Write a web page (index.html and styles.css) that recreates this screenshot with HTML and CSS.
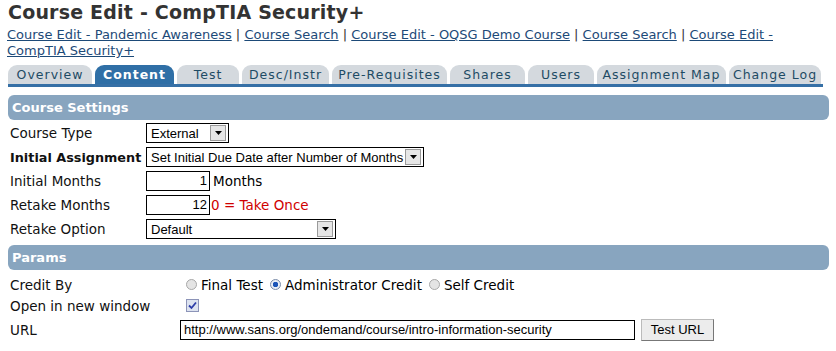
FILE: index.html
```html
<!DOCTYPE html>
<html lang="en">
<head>
	<meta charset="UTF-8">
	<title>Course Edit - CompTIA Security+</title>
	<link rel="stylesheet" href="styles.css">
</head>
<body>
	<div class="page">
		<h1 class="title">Course Edit - CompTIA Security+</h1>
		<div class="crumbs">
			<a href="#">Course Edit - Pandemic Awareness</a> | <a href="#">Course Search</a> | <a href="#">Course Edit - OQSG Demo Course</a> | <a href="#">Course Search</a> | <a href="#">Course Edit -</a><br><a href="#">CompTIA Security+</a>
		</div>
		<ul class="tabs">
			<li class="tab" style="width:84px">Overview</li>
			<li class="tab active" style="width:79px">Content</li>
			<li class="tab" style="width:62px">Test</li>
			<li class="tab" style="width:87px">Desc/Instr</li>
			<li class="tab" style="width:115px">Pre-Requisites</li>
			<li class="tab" style="width:75px">Shares</li>
			<li class="tab" style="width:66px">Users</li>
			<li class="tab" style="width:129px">Assignment Map</li>
			<li class="tab" style="width:92px">Change Log</li>
		</ul>

		<div class="section">Course Settings</div>
		<div class="rows">
			<div class="row">
				<div class="label">Course Type</div>
				<div class="select" style="width:81px"><span class="val">External</span><span class="arrow"><svg width="7" height="4" viewBox="0 0 7 4"><path d="M0 0h7L3.5 4z" fill="#000"/></svg></span></div>
			</div>
			<div class="row">
				<div class="label bold">Initial Assignment</div>
				<div class="select" style="width:276px"><span class="val">Set Initial Due Date after Number of Months</span><span class="arrow"><svg width="7" height="4" viewBox="0 0 7 4"><path d="M0 0h7L3.5 4z" fill="#000"/></svg></span></div>
			</div>
			<div class="row">
				<div class="label">Initial Months</div>
				<div class="num">1</div>
				<span class="after">Months</span>
			</div>
			<div class="row">
				<div class="label">Retake Months</div>
				<div class="num">12</div>
				<span class="after red">0 = Take Once</span>
			</div>
			<div class="row">
				<div class="label">Retake Option</div>
				<div class="select" style="width:188px"><span class="val">Default</span><span class="arrow"><svg width="7" height="4" viewBox="0 0 7 4"><path d="M0 0h7L3.5 4z" fill="#000"/></svg></span></div>
			</div>
		</div>

		<div class="section second">Params</div>
		<div class="params">
			<div class="prow">
				<div class="plabel">Credit By</div>
				<div class="opts">
					<span class="radio"></span>Final Test
					<span class="radio"></span>Administrator Credit
					<span class="radio"></span>Self Credit
				</div>
			</div>
			<div class="prow">
				<div class="plabel">Open in new window</div>
				<div class="opts">
					<span class="check"><svg width="9" height="9" viewBox="0 0 9 9"><path d="M1 4.5l2.5 2.5L8 1.5" stroke="#2c3da8" stroke-width="1.8" fill="none"/></svg></span>
				</div>
			</div>
			<div class="prow">
				<div class="plabel">URL</div>
				<div class="url">http://www.sans.org/ondemand/course/intro-information-security</div>
				<div class="btn">Test URL</div>
			</div>
		</div>
	</div>
</body>
</html>
```

FILE: styles.css
```css
body{
	margin: 0;
	background: #fff;
	font-family: "DejaVu Sans", Verdana, sans-serif;
	font-size: 13px;
	color: #000;
}
.page{
	padding: 0 7px 0 8px;
}
.title{
	margin: 0;
	padding-top: 1px;
	font-size: 19px;
	font-weight: bold;
	color: #333;
	line-height: 22px;
	letter-spacing: 0.2px;
}
.crumbs{
	margin-top: 4px;
	line-height: 16px;
	color: #333;
	width: 810px;
	margin-left: -1px;
}
.crumbs a{
	color: #1d4a78;
}
.tabs{
	list-style: none;
	margin: 6px 0 0 0;
	padding: 0;
	display: flex;
	gap: 3px;
	width: 815px;
	border-bottom: 3px solid #3670a6;
}
.tab{
	height: 19px;
	line-height: 20px;
	text-align: center;
	background: #d4d9de;
	color: #1e4b64;
	border-radius: 9px 9px 0 0;
	letter-spacing: 1px;
	font-size: 12.5px;
	white-space: nowrap;
	overflow: hidden;
}
.tab.active{
	background: #2f6fa6;
	color: #fff;
	font-weight: bold;
}
.section{
	margin-top: 8px;
	width: 817px;
	height: 25px;
	line-height: 25px;
	padding-left: 4px;
	background: #88a5bf;
	color: #fff;
	font-weight: bold;
	border-radius: 6px;
}
.section.second{
	margin-top: 4px;
}
.rows{
	padding: 1px 0 0 2px;
}
.row{
	display: flex;
	align-items: center;
	height: 24px;
}
.label{
	width: 136px;
	font-size: 13.5px;
	color: #111;
	white-space: nowrap;
}
.label.bold{
	font-weight: bold;
	font-size: 12.8px;
}
.select{
	height: 18px;
	border: 1px solid #000;
	display: flex;
	align-items: center;
	font-family: "Liberation Sans", Arial, sans-serif;
	font-size: 13px;
	background: #fff;
}
.select .val{
	flex: 1;
	padding-left: 4px;
	white-space: nowrap;
	overflow: hidden;
}
.select .arrow{
	width: 14px;
	height: 14px;
	margin-right: 2px;
	border: 1px solid #9a9a9a;
	background: #e6e6e6;
	display: flex;
	align-items: center;
	justify-content: center;
}
.num{
	width: 60px;
	height: 18px;
	border: 1px solid #000;
	text-align: right;
	padding-right: 2px;
	font-family: "Liberation Sans", Arial, sans-serif;
	font-size: 13px;
	line-height: 18px;
}
.after{
	margin-left: 3px;
	font-size: 13.5px;
}
.after.red{
	color: #d00000;
	margin-left: 1px;
}
.params{
	padding: 4px 0 0 2px;
}
.prow{
	display: flex;
	align-items: center;
	height: 21px;
}
.prow:last-child{
	height: 27px;
}
.plabel{
	width: 170px;
	font-size: 13.5px;
	color: #111;
}
.opts{
	display: flex;
	align-items: center;
	font-size: 13.5px;
}
.radio{
	width: 11px;
	height: 11px;
	border-radius: 50%;
	border: 1px solid #a8a8a8;
	background: #e4e4e4;
	margin: 0 4px 0 7px;
	box-sizing: border-box;
	display: inline-block;
}
.radio:first-child{
	margin-left: 6px;
}
.radio:nth-child(2){
	background: radial-gradient(circle, #1b55b8 0, #1b55b8 2.5px, #e8eef6 3px);
	border-color: #7a8ba8;
}
.check{
	margin-left: 6px;
	width: 11px;
	height: 11px;
	border: 1px solid #8c94b8;
	background: #dde3f0;
	display: flex;
	align-items: center;
	justify-content: center;
}
.url{
	width: 455px;
	height: 20px;
	box-sizing: border-box;
	line-height: 18px;
	border: 1px solid #000;
	padding-left: 3px;
	font-family: "Liberation Sans", Arial, sans-serif;
	font-size: 13px;
	white-space: nowrap;
	overflow: hidden;
}
.btn{
	margin-left: 6px;
	width: 71px;
	height: 20px;
	line-height: 20px;
	text-align: center;
	background: #ececec;
	border: 1px solid #bbb;
	border-right-color: #777;
	border-bottom-color: #777;
	font-family: "Liberation Sans", Arial, sans-serif;
	font-size: 13px;
}
```
